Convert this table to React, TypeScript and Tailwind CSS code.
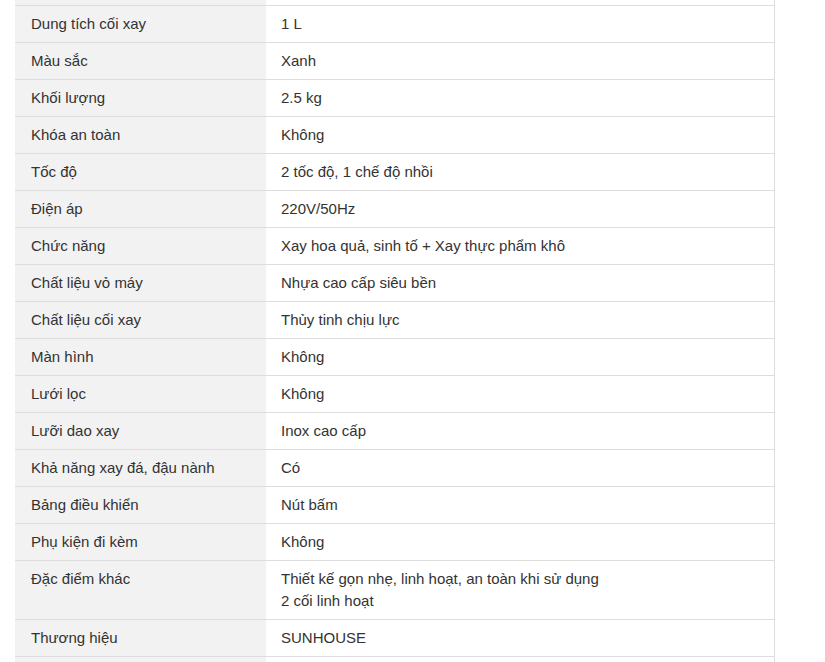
import React from 'react';

const specs: [string, string[]][] = [
  ['Dung tích cối xay', ['1 L']],
  ['Màu sắc', ['Xanh']],
  ['Khối lượng', ['2.5 kg']],
  ['Khóa an toàn', ['Không']],
  ['Tốc độ', ['2 tốc độ, 1 chế độ nhồi']],
  ['Điện áp', ['220V/50Hz']],
  ['Chức năng', ['Xay hoa quả, sinh tố + Xay thực phẩm khô']],
  ['Chất liệu vỏ máy', ['Nhựa cao cấp siêu bền']],
  ['Chất liệu cối xay', ['Thủy tinh chịu lực']],
  ['Màn hình', ['Không']],
  ['Lưới lọc', ['Không']],
  ['Lưỡi dao xay', ['Inox cao cấp']],
  ['Khả năng xay đá, đậu nành', ['Có']],
  ['Bảng điều khiển', ['Nút bấm']],
  ['Phụ kiện đi kèm', ['Không']],
  ['Đặc điểm khác', ['Thiết kế gọn nhẹ, linh hoạt, an toàn khi sử dụng', '2 cối linh hoạt']],
  ['Thương hiệu', ['SUNHOUSE']],
];

function Row({ label, value }: { label: string; value: string[] }) {
  return (
    <div className="flex border-t border-[#dddddd]">
      <div className="w-[251px] shrink-0 bg-[#f2f2f2] pl-[16px] pr-[15px] py-[7px] leading-[22px]">{label}</div>
      <div className="flex-1 bg-white px-[15px] py-[7px] leading-[22px]">
        {value.map((v, i) => (
          <div key={i}>{v}</div>
        ))}
      </div>
    </div>
  );
}

export default function App() {
  return (
    <div className="h-[662px] overflow-hidden bg-white pl-[15px] pr-[50px] font-['Liberation_Sans',Arial,sans-serif] text-[15px] text-[#333333]">
      <div className="border-r border-[#dddddd]">
        <div className="flex h-[5px]">
          <div className="w-[251px] shrink-0 bg-[#f2f2f2]" />
          <div className="flex-1 bg-white" />
        </div>
        {specs.map(([label, value]) => (
          <Row key={label} label={label} value={value} />
        ))}
        <div className="flex h-[20px] border-t border-[#dddddd]">
          <div className="w-[251px] shrink-0 bg-[#f2f2f2]" />
          <div className="flex-1 bg-white" />
        </div>
      </div>
    </div>
  );
}
